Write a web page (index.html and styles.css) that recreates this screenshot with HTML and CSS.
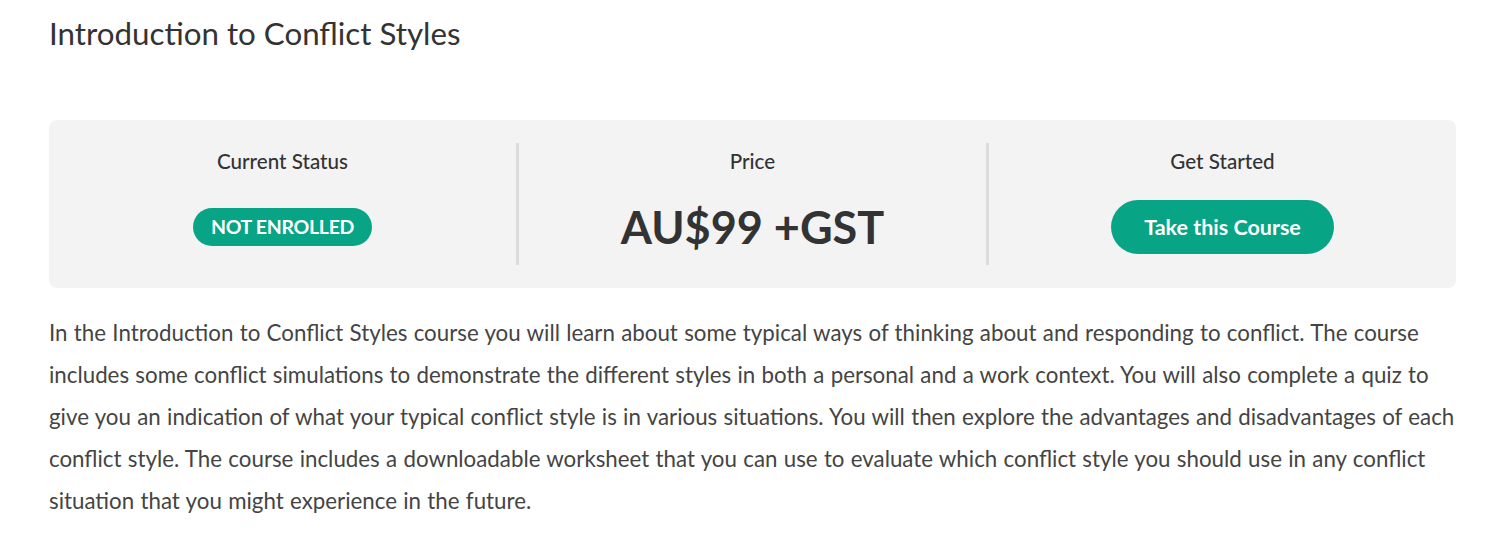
FILE: index.html
```html
<!DOCTYPE html>
<html lang="en">
<head>
    <meta charset="UTF-8">
    <title>Introduction to Conflict Styles</title>
    <link rel="stylesheet" href="styles.css">
</head>
<body>
    <div class="course">
        <h1 class="course-title">Introduction to Conflict Styles</h1>

        <div class="course-status">
            <div class="status-col">
                <div class="status-label">Current Status</div>
                <div class="status-value">
                    <span class="badge">NOT ENROLLED</span>
                </div>
            </div>
            <div class="status-col">
                <div class="status-label">Price</div>
                <div class="status-value">
                    <span class="price">AU$99 +GST</span>
                </div>
            </div>
            <div class="status-col">
                <div class="status-label">Get Started</div>
                <div class="status-value">
                    <a href="#" class="take-btn">Take this Course</a>
                </div>
            </div>
        </div>

        <p class="course-desc">In the Introduction to Conflict Styles course you will learn about some typical ways of thinking about and responding to conflict. The course includes some conflict simulations to demonstrate the different styles in both a personal and a work context. You will also complete a quiz to give you an indication of what your typical conflict style is in various situations. You will then explore the advantages and disadvantages of each conflict style. The course includes a downloadable worksheet that you can use to evaluate which conflict style you should use in any conflict situation that you might experience in the future.</p>
    </div>
</body>
</html>
```

FILE: styles.css
```css
body {
    font-family: Lato, "Open Sans", sans-serif;
    background-color: #fff;
    color: #333;
    margin: 0;
}
.course {
    padding: 0 44px 0 49px;
}
.course-title {
    font-size: 31.3px;
    font-weight: 400;
    color: #333;
    margin: 0;
    padding-top: 13px;
    line-height: 40px;
}
.course-status {
    display: flex;
    background-color: #f3f3f3;
    border-radius: 8px;
    margin-top: 67px;
    padding: 23px 0;
}
.status-col {
    flex: 1;
    display: flex;
    flex-direction: column;
    align-items: center;
    border-left: 3px solid #dcdcdc;
}
.status-col:first-child {
    border-left: none;
}
.status-label {
    font-size: 20.6px;
    font-weight: 500;
    color: #333;
    line-height: 36px;
}
.status-value {
    height: 76px;
    margin-top: 10px;
    display: flex;
    align-items: center;
}
.badge {
    background-color: #07a485;
    color: #fff;
    font-size: 19.5px;
    font-weight: 700;
    padding: 0 18px;
    border-radius: 20px;
    line-height: 38px;
    letter-spacing: -0.3px;
}
.price {
    font-size: 45px;
    font-weight: 700;
    color: #333;
}
.take-btn {
    background-color: #07a485;
    color: #fff;
    font-size: 21.5px;
    font-weight: 700;
    text-decoration: none;
    line-height: 54px;
    padding: 0 33px;
    border-radius: 27px;
}
.course-desc {
    font-size: 22.3px;
    word-spacing: 0.6px;
    line-height: 42px;
    color: #444;
    margin: 24px 0 0;
}
```
